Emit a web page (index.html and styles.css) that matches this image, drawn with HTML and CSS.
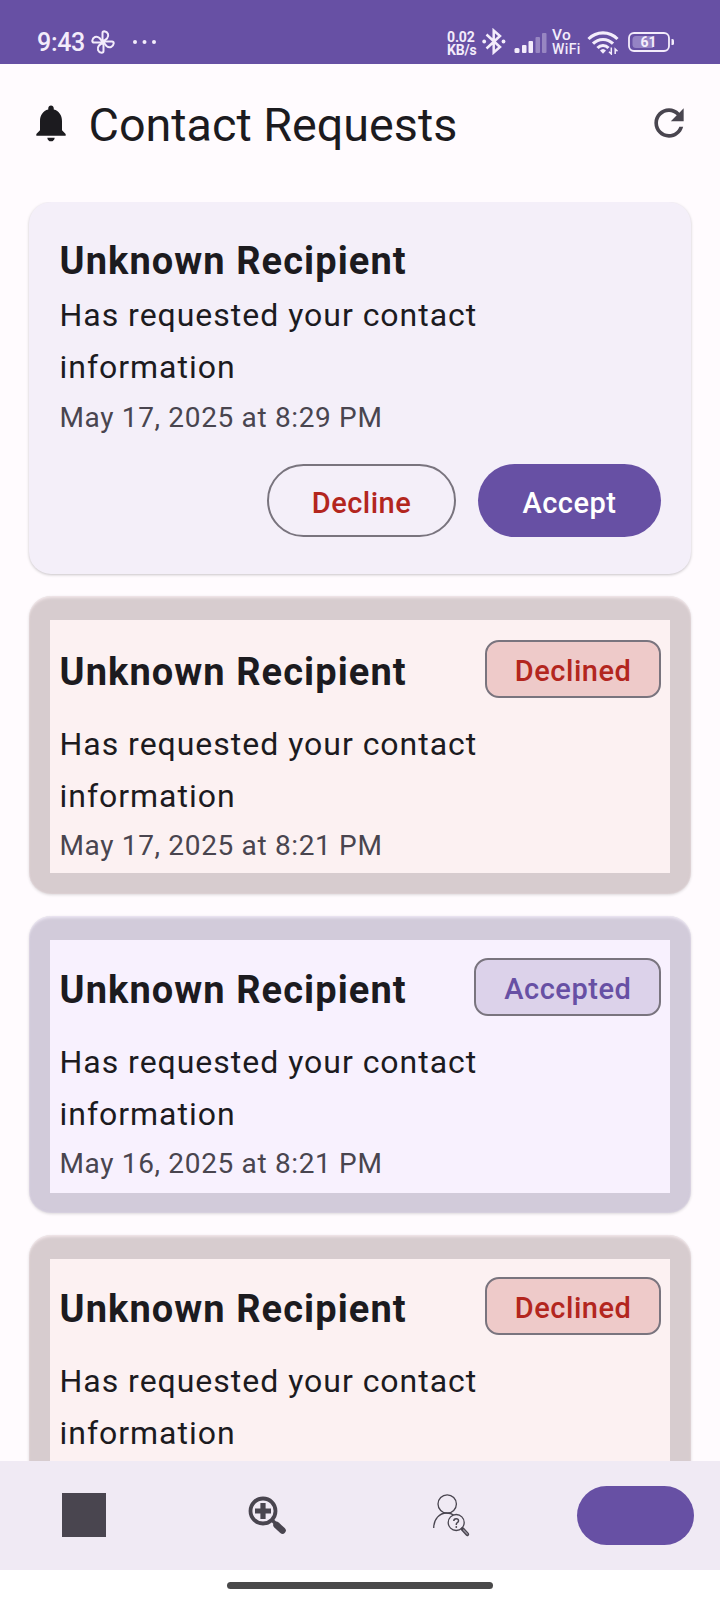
FILE: index.html
```html
<!DOCTYPE html>
<html lang="en">
<head>
<meta charset="utf-8">
<title>Contact Requests</title>
<link rel="stylesheet" href="styles.css">
</head>
<body>
<div class="screen">
  <header class="status">
    <div class="status-left">
      <span class="clock">9:43</span>
      <svg class="fan" width="24" height="24" viewBox="0 0 24 24" fill="none" stroke="#f3ecfb" stroke-width="2" stroke-linejoin="round">
        <path d="M11.500 11.500V3Q11.500 1.300 13.300 1.300C17 1.800 18.500 5.500 16 8.500Q14 10.500 11.500 11.500Z"/>
        <path d="M12.500 11.500H21Q22.700 11.500 22.700 13.300C22.200 17 18.500 18.500 15.500 16Q13.500 14 12.500 11.500Z"/>
        <path d="M12.500 12.500V21Q12.500 22.700 10.700 22.700C7 22.200 5.500 18.500 8 15.500Q10 13.500 12.500 12.500Z"/>
        <path d="M11.500 12.500H3Q1.300 12.500 1.300 10.700C1.800 7 5.500 5.500 8.500 8Q10.500 10 11.500 12.500Z"/>
      </svg>
      <svg class="dots" width="26" height="6" viewBox="0 0 26 6" fill="#f3ecfb"><circle cx="3" cy="3" r="2"/><circle cx="12.500" cy="3" r="2"/><circle cx="22" cy="3" r="2"/></svg>
    </div>
    <div class="status-right">
      <span class="rate">0.02<br>KB/s</span>
      <svg class="bt" width="24" height="27" viewBox="0 0 24 27" fill="none" stroke="#f3ecfb" stroke-width="2.500"><path d="M4.500 6.500L18 19L11.700 24.500V2.500L18 8L4.500 20.500"/><circle cx="2.200" cy="13.500" r="1.900" fill="#f3ecfb" stroke="none"/><circle cx="21.500" cy="13.500" r="1.900" fill="#f3ecfb" stroke="none"/></svg>
      <svg class="signal" width="33" height="22" viewBox="0 0 33 22" fill="#f3ecfb"><rect x="0.500" y="16" width="5" height="5" rx="1.500"/><rect x="8" y="13" width="4.500" height="8" rx="1"/><rect x="14.500" y="9" width="4.500" height="12" rx="1"/><g opacity=".35"><rect x="21.500" y="5" width="4.500" height="16" rx="1"/><rect x="28" y="1" width="4.500" height="20" rx="1"/></g></svg>
      <span class="vowifi"><span class="vo">Vo</span><br>WiFi</span>
      <svg class="wifi" width="32" height="25" viewBox="0 0 32 25" fill="none" stroke="#f3ecfb" stroke-width="3.100"><path d="M1.500 9C9.500 .8 22.500 .8 30.500 9"/><path d="M6 13.700C11.500 8 20.500 8 26 13.700"/><path d="M10.500 18C13.500 14.700 18.500 14.700 21.500 18"/><path d="M13 20.500Q16 17.500 19 20.500L16 23.700Z" fill="#f3ecfb" stroke="none"/><path d="M24.300 17.500V24L22 21.800M28.200 24V19L30.500 21.200" stroke-width="1.500"/></svg>
      <svg class="battery" width="48" height="20" viewBox="0 0 48 20"><rect x="1" y="1" width="40" height="18" rx="5" fill="none" stroke="#f3ecfb" stroke-width="1.800"/><path d="M8 4H25V16H8Q4.500 16 4.500 12.500V7.500Q4.500 4 8 4Z" fill="#9583c4"/><path d="M43.500 7H44.500Q46 7 46 8.500V11.500Q46 13 44.500 13H43.500Z" fill="#f3ecfb"/><text class="battery-text" x="20.500" y="15" text-anchor="middle">61</text></svg>
    </div>
  </header>

  <div class="topbar">
    <svg class="bell" width="44" height="44" viewBox="0 0 24 24" fill="#1c1b1f"><path d="M12 22c1.100 0 2-.9 2-2h-4c0 1.100.89 2 2 2zm6-6v-5c0-3.070-1.640-5.640-4.500-6.320V4c0-.83-.67-1.500-1.500-1.500s-1.500.67-1.500 1.500v.68C7.630 5.360 6 7.920 6 11v5l-2 2v1h16v-1l-2-2z"/></svg>
    <h1 class="title">Contact Requests</h1>
    <svg class="refresh" width="44" height="44" viewBox="0 0 24 24" fill="#49454f"><path d="M17.650 6.350C16.200 4.900 14.210 4 12 4c-4.420 0-7.990 3.580-7.990 8s3.570 8 7.990 8c3.730 0 6.840-2.550 7.730-6h-2.080c-.82 2.330-3.040 4-5.650 4-3.310 0-6-2.690-6-6s2.690-6 6-6c1.660 0 3.140.69 4.220 1.780L13 11h7V4l-2.350 2.350z"/></svg>
  </div>

  <main class="list">
    <article class="card pending">
      <h2 class="name">Unknown Recipient</h2>
      <p class="message">Has requested your contact information</p>
      <p class="date">May 17, 2025 at 8:29 PM</p>
      <div class="actions">
        <button class="btn decline">Decline</button>
        <button class="btn accept">Accept</button>
      </div>
    </article>
    <article class="card done declined">
      <div class="inner">
        <div class="head"><h2 class="name">Unknown Recipient</h2><span class="badge">Declined</span></div>
        <p class="message">Has requested your contact information</p>
        <p class="date">May 17, 2025 at 8:21 PM</p>
      </div>
    </article>
    <article class="card done accepted">
      <div class="inner">
        <div class="head"><h2 class="name">Unknown Recipient</h2><span class="badge">Accepted</span></div>
        <p class="message">Has requested your contact information</p>
        <p class="date">May 16, 2025 at 8:21 PM</p>
      </div>
    </article>
    <article class="card done declined">
      <div class="inner">
        <div class="head"><h2 class="name">Unknown Recipient</h2><span class="badge">Declined</span></div>
        <p class="message">Has requested your contact information</p>
      </div>
    </article>
  </main>

  <nav class="nav">
    <div class="nav-item"><span class="square"></span></div>
    <div class="nav-item">
      <svg width="44" height="44" viewBox="0 0 44 44" fill="none" stroke="#49454f"><circle cx="18" cy="18" r="12.500" stroke-width="3.800"/><path d="M18 10V26M10 18H26" stroke-width="5.200"/><path d="M27 27L31 31" stroke-width="3.500"/><path d="M31.500 32L37.500 37.500" stroke-width="6.500" stroke-linecap="round"/></svg>
    </div>
    <div class="nav-item">
      <svg width="44" height="44" viewBox="0 0 44 44" fill="none" stroke="#49454f" stroke-width="1.300"><circle cx="19.200" cy="11" r="9.200"/><path d="M5.700 35C5.700 26 11.500 20 18.700 20Q23 20 25.500 22"/><circle cx="28.200" cy="29.500" r="8"/><path d="M25.800 28Q25.800 25.700 28.200 25.700T30.500 28Q30.500 29 29.300 29.700T28.300 32" stroke-width="1.500"/><circle cx="28.300" cy="34" r=".9" fill="#49454f" stroke="none"/><path d="M34.500 36L39.300 41.300" stroke-width="3.800" stroke-linecap="round"/><path d="M35.500 37L39.300 41" stroke="#98939e" stroke-width="1.200" stroke-linecap="round"/></svg>
    </div>
    <div class="nav-item"><span class="pill"></span></div>
  </nav>
  <div class="gesture"><span class="handle"></span></div>
</div>
</body>
</html>
```

FILE: styles.css
```css
* { box-sizing: border-box; }
body { margin: 0; font-family: Roboto, "Liberation Sans", sans-serif; color: #1c1b1f; }
h1, h2, p { margin: 0; }
.screen { width: 720px; height: 1600px; display: flex; flex-direction: column; overflow: hidden; background: #fffbfe; }

.status { flex: none; height: 64px; padding: 0 44px 0 37px; display: flex; justify-content: space-between; background: #6750a4; color: #f3ecfb; }
.status-left, .status-right { display: flex; align-items: flex-start; }
.clock { margin-top: 28px; width: 54px; font-size: 25px; font-weight: 500; line-height: 30px; letter-spacing: -.3px; white-space: nowrap; }
.fan { margin-top: 30px; }
.dots { margin: 39px 0 0 17px; }
.rate { width: 34px; margin-top: 31px; font-size: 14px; line-height: 13px; font-weight: 700; letter-spacing: -.15px; white-space: nowrap; }
.bt { margin: 28px 0 0 1px; }
.signal { margin: 32px 0 0 8px; }
.vowifi { width: 35px; margin: 28px 0 0 5px; font-size: 14px; line-height: 14px; font-weight: 500; letter-spacing: .4px; white-space: nowrap; }
.vo { font-size: 15.500px; line-height: 14px; }
.wifi { margin: 30px 0 0 0; }
.battery { margin: 32px 0 0 9px; }
.battery-text { font-size: 14px; font-weight: 700; fill: #f3ecfb; }

.topbar { flex: none; height: 138px; padding: 36px 29px 0; display: flex; align-items: flex-start; }
.bell { margin-top: 1px; }
.title { flex: 1; margin: 0 0 0 15.500px; font-size: 46.700px; line-height: 50px; font-weight: 400; white-space: nowrap; }
.refresh { margin: 1px 0 0 9px; }

.list { flex: 1; min-height: 0; overflow: hidden; padding: 0 29px; display: flex; flex-direction: column; gap: 22px; }
.card { flex: none; width: 662px; border-radius: 22px; box-shadow: 0 1px 3px rgba(0, 0, 0, .22); }
.pending { height: 372px; padding: 34px 30px 0; background: #f4eff9; }
.pending .message { margin: 3px 0 1px; }
.name { font-size: 38px; line-height: 50px; letter-spacing: 1.080px; font-weight: 700; white-space: nowrap; }
.message { font-size: 32px; line-height: 52px; letter-spacing: .98px; }
.date { font-size: 28px; line-height: 48px; letter-spacing: .66px; color: #49454f; }
.name, .message, .date { padding-left: .5px; }
.actions { display: flex; justify-content: flex-end; gap: 22px; margin-top: 22px; }
.btn { height: 73px; border-radius: 37px; font: 500 29px/70px Roboto, "Liberation Sans", sans-serif; letter-spacing: .5px; }
.decline { width: 189px; border: 2px solid #79747e; padding: 2px 0 0; background: none; color: #b3261e; }
.accept { width: 183px; border: 0; padding: 4px 0 0; background: #6750a4; color: #fff; }

.done { height: 297.500px; padding: 24px 21px 0; }
.done.declined { background: #d7cccf; box-shadow: 0 1px 3px rgba(0, 0, 0, .14), inset 0 3px 3px -1px rgba(255, 245, 248, .6), inset 0 0 2px rgba(255, 245, 248, .5); }
.done.accepted { background: #d2cbda; box-shadow: 0 1px 3px rgba(0, 0, 0, .14), inset 0 3px 3px -1px rgba(250, 245, 255, .6), inset 0 0 2px rgba(250, 245, 255, .5); }
.inner { height: 253px; padding: 20px 9px 0; }
.declined .inner { background: #fcf1f2; }
.accepted .inner { background: #f8f1fe; }
.done:nth-child(3) .inner { padding-top: 18.500px; }
.done:nth-child(4) .inner { padding-top: 18px; }
.head { display: flex; justify-content: space-between; height: 78px; }
.head .name { margin-top: 7px; }
.badge { height: 58px; border: 2px solid #79747e; border-radius: 14px; padding: 2px 27.500px 0 28px; font-size: 29px; line-height: 54px; font-weight: 500; letter-spacing: .55px; }
.declined .badge { background: #eecac9; color: #b3261e; }
.accepted .badge { background: #dcd2ea; color: #6750a4; }

.nav { flex: none; height: 109px; padding-bottom: 1px; display: grid; grid-template-columns: 168px 198px 168px 202px; align-items: center; background: #f0eaf4; }
.nav-item { display: flex; justify-content: center; }
.square { width: 44px; height: 44px; background: #49454f; }
.pill { width: 117px; height: 59px; border-radius: 30px; background: #6750a4; }
.gesture { flex: none; height: 30px; display: flex; justify-content: center; align-items: center; background: #fff; }
.handle { width: 266px; height: 7px; border-radius: 4px; background: #49494a; }
```
